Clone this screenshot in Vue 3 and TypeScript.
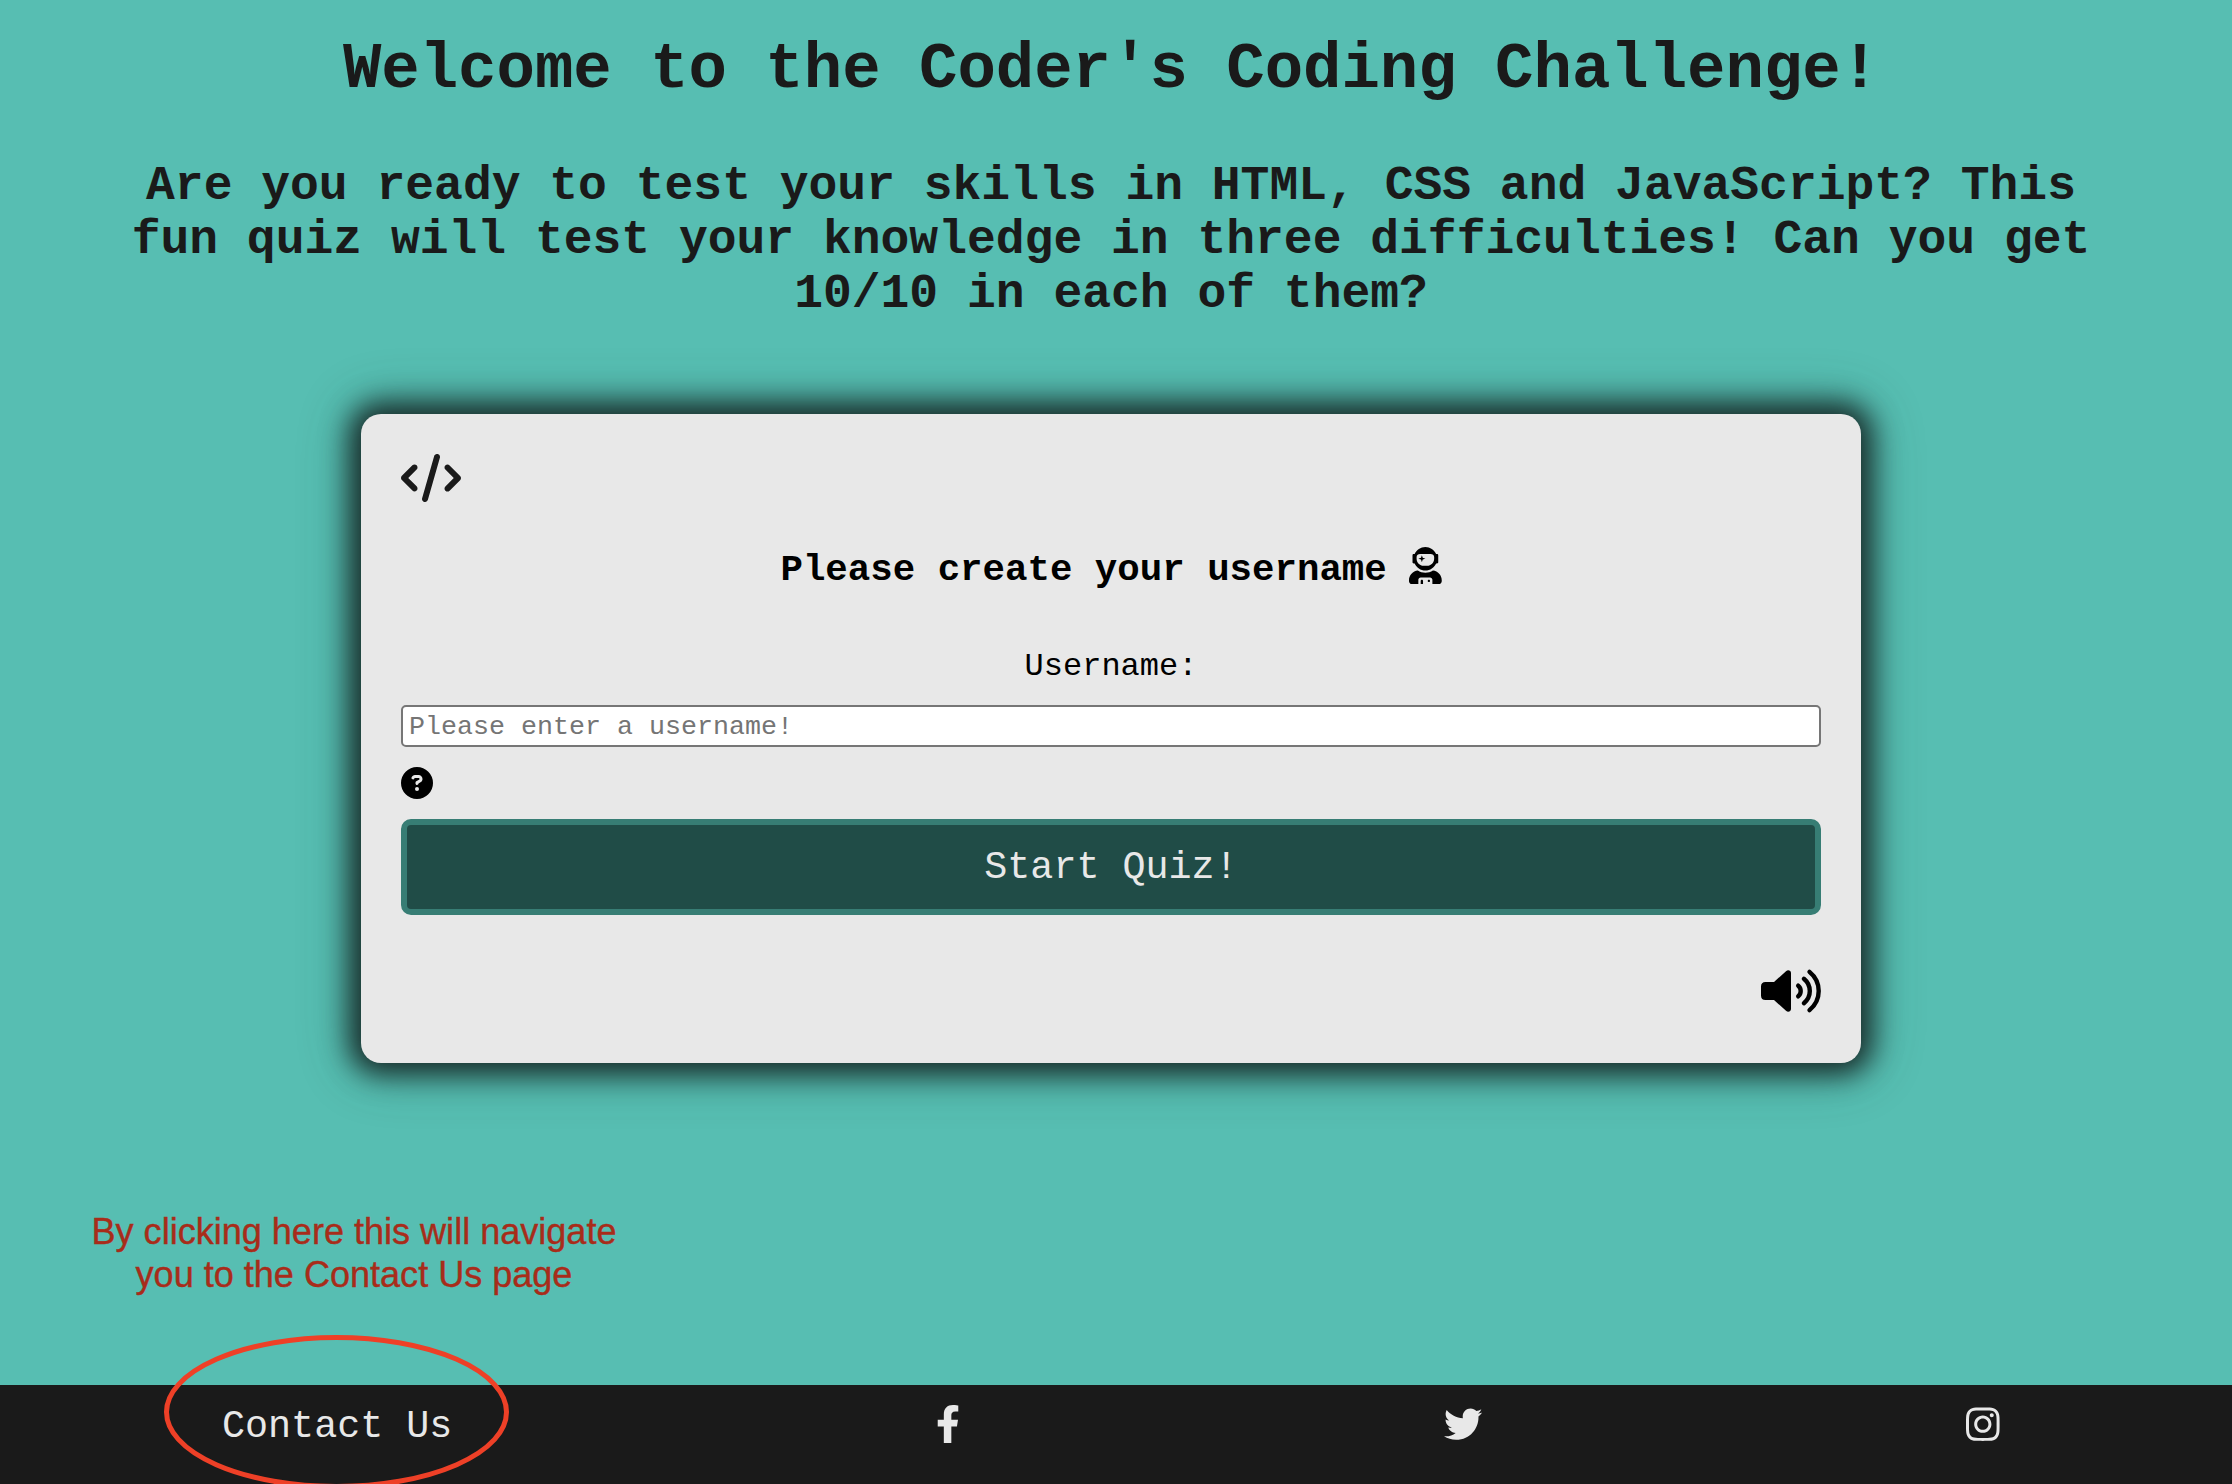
<script setup lang="ts">
import { ref } from 'vue'

const username = ref('')
</script>

<template>
  <div class="page">
    <main class="main">
      <h1>Welcome to the Coder's Coding Challenge!</h1>
      <h2>
        Are you ready to test your skills in HTML, CSS and JavaScript? This<br />
        fun quiz will test your knowledge in three difficulties! Can you get<br />
        10/10 in each of them?
      </h2>
      <section class="card">
        <svg class="code" viewBox="0 0 640 512"><path d="M392.8 1.2c-17-4.900-34.700 5-39.600 22l-128 448c-4.900 17 5 34.700 22 39.600s34.700-5 39.600-22l128-448c4.900-17-5-34.700-22-39.600zm80.600 120.100c-12.500 12.500-12.500 32.800 0 45.300L562.700 256l-89.400 89.400c-12.500 12.500-12.500 32.800 0 45.300s32.800 12.500 45.300 0l112-112c12.500-12.500 12.500-32.800 0-45.300l-112-112c-12.500-12.500-32.800-12.500-45.300 0zm-306.700 0c-12.500-12.500-32.800-12.500-45.300 0l-112 112c-12.500 12.500-12.500 32.800 0 45.300l112 112c12.500 12.500 32.800 12.500 45.300 0s12.500-32.800 0-45.300L77.300 256l89.400-89.400c12.500-12.500 12.500-32.800 0-45.300z" /></svg>
        <h3>
          <span>Please create your username</span>
          <svg class="user" viewBox="0 0 448 512">
            <path fill-rule="evenodd" d="M64 224h13.500c24.700 56.500 80.900 96 146.500 96s121.800-39.500 146.500-96H384c8.800 0 16-7.200 16-16v-96c0-8.800-7.200-16-16-16h-13.500C345.800 39.500 289.600 0 224 0S102.200 39.500 77.500 96H64c-8.800 0-16 7.200-16 16v96c0 8.800 7.200 16 16 16zm40-88c0-22.100 21.500-40 48-40h144c26.500 0 48 17.900 48 40v24c0 53-43 96-96 96h-48c-53 0-96-43-96-96v-24zm72 72l12-36 36-12-36-12-12-36-12 36-36 12 36 12 12 36zm151.600 113.400C297.700 340.700 262.200 352 224 352s-73.700-11.300-103.600-30.600C52.900 328.500 0 385 0 454.400v9.600c0 26.500 21.500 48 48 48h80v-64c0-17.700 14.300-32 32-32h128c17.700 0 32 14.300 32 32v64h80c26.500 0 48-21.500 48-48v-9.600c0-69.400-52.900-125.900-120.400-133zM272 448c-8.800 0-16 7.200-16 16s7.200 16 16 16 16-7.200 16-16-7.200-16-16-16zm-96 0c-8.800 0-16 7.200-16 16v48h32v-48c0-8.800-7.200-16-16-16z" />
          </svg>
        </h3>
        <label for="username">Username:</label>
        <input id="username" v-model="username" type="text" placeholder="Please enter a username!" />
        <svg class="help" viewBox="0 0 512 512"><path d="M256 512A256 256 0 1 0 256 0a256 256 0 1 0 0 512zM169.800 165.300c7.900-22.300 29.100-37.300 52.800-37.300h58.300c34.900 0 63.100 28.300 63.100 63.100c0 22.600-12.100 43.500-31.700 54.800L280 264.400c-.2 13-10.900 23.600-24 23.600c-13.300 0-24-10.700-24-24V250.500c0-8.600 4.600-16.500 12.100-20.800l44.300-25.400c4.700-2.700 7.600-7.700 7.600-13.100c0-8.400-6.800-15.100-15.100-15.100H222.600c-3.400 0-6.400 2.100-7.500 5.300l-.4 1.200c-4.400 12.500-18.200 19-30.600 14.600s-19-18.200-14.600-30.600l.4-1.200zM224 352a32 32 0 1 1 64 0 32 32 0 1 1-64 0z" /></svg>
        <button type="button">Start Quiz!</button>
        <svg class="sound" viewBox="0 0 60 48">
          <path d="M4.500 15H13L25 4.200C27 2.500 30 3.500 30 6V42C30 44.500 27 45.500 25 43.800L13 33H4.500Q0 33 0 28.500V19.500Q0 15 4.500 15Z" />
          <g class="waves">
            <path d="M37.200 18.700Q39.700 20.700 39.700 24T37.200 29.300" />
            <path d="M42.900 11.800Q48.800 16.700 48.800 24T42.900 36.200" />
            <path d="M48.500 4.900Q57.700 12.500 57.700 24T48.500 43.100" />
          </g>
        </svg>
      </section>
    </main>

    <footer class="footer">
      <a class="contact">Contact Us</a>
      <svg class="social" viewBox="0 0 320 512" style="width: 24px"><path d="M279.140 288l14.220-92.660h-88.910v-60.130c0-25.350 12.420-50.060 52.240-50.060h40.420V6.260S260.430 0 225.360 0c-73.220 0-121.080 44.380-121.080 124.720v70.620H22.890V288h81.390v224h100.170V288z" /></svg>
      <svg class="social" viewBox="0 0 512 512" style="width: 38.4px"><path d="M459.370 151.716c.325 4.548.325 9.097.325 13.645 0 138.720-105.583 298.558-298.558 298.558-59.452 0-114.680-17.219-161.137-47.106 8.447.974 16.568 1.299 25.340 1.299 49.055 0 94.213-16.568 130.274-44.832-46.132-.975-84.792-31.188-98.112-72.772 6.498.974 12.995 1.624 19.818 1.624 9.421 0 18.843-1.300 27.614-3.573-48.081-9.747-84.143-51.980-84.143-102.985v-1.299c13.969 7.797 30.214 12.670 47.431 13.319-28.264-18.843-46.781-51.005-46.781-87.391 0-19.492 5.197-37.360 14.294-52.954 51.655 63.675 129.300 105.258 216.365 109.807-1.624-7.797-2.599-15.918-2.599-24.040 0-57.828 46.782-104.934 104.934-104.934 30.213 0 57.502 12.670 76.670 33.137 23.715-4.548 46.456-13.320 66.599-25.340-7.798 24.366-24.366 44.833-46.132 57.827 21.117-2.273 41.584-8.122 60.426-16.243-14.292 20.791-32.161 39.308-52.628 54.253z" /></svg>
      <svg class="social" viewBox="0 0 448 512" style="width: 33.6px"><path d="M224.100 141c-63.600 0-114.900 51.300-114.900 114.900s51.300 114.900 114.900 114.900S339 319.500 339 255.900 287.700 141 224.100 141zm0 189.600c-41.100 0-74.700-33.500-74.700-74.700s33.500-74.700 74.700-74.700 74.700 33.500 74.700 74.700-33.600 74.700-74.700 74.700zm146.400-194.300c0 14.900-12 26.800-26.800 26.800-14.900 0-26.800-12-26.800-26.800s12-26.800 26.800-26.800 26.800 12 26.800 26.800zm76.100 27.200c-1.700-35.900-9.900-67.700-36.200-93.900-26.200-26.200-58-34.400-93.900-36.200-37-2.100-147.900-2.100-184.900 0-35.800 1.700-67.600 9.900-93.900 36.100s-34.400 58-36.200 93.900c-2.100 37-2.100 147.900 0 184.900 1.700 35.900 9.900 67.700 36.200 93.900s58 34.400 93.900 36.200c37 2.100 147.900 2.100 184.900 0 35.900-1.700 67.700-9.900 93.900-36.200 26.200-26.200 34.400-58 36.200-93.900 2.100-37 2.100-147.800 0-184.800zM398.800 388c-7.800 19.600-22.900 34.700-42.600 42.600-29.500 11.700-99.500 9-132.100 9s-102.700 2.600-132.100-9c-19.600-7.800-34.700-22.900-42.600-42.600-11.700-29.500-9-99.500-9-132.100s-2.600-102.700 9-132.100c7.800-19.600 22.900-34.700 42.600-42.600 29.500-11.700 99.500-9 132.100-9s102.700-2.600 132.100 9c19.600 7.800 34.700 22.900 42.600 42.600 11.700 29.500 9 99.500 9 132.100s2.700 102.700-9 132.100z" /></svg>
    </footer>

    <!-- Callout drawn over the page, pointing at the contact link -->
    <p class="note">By clicking here this will navigate<br />you to the Contact Us page</p>
    <svg class="ring" viewBox="0 0 350 152"><ellipse cx="174.500" cy="78" rx="170" ry="74.500" /></svg>
  </div>
</template>

<style>
body { background: #57beb2; }
</style>

<style scoped>
.page {
  position: relative;
  box-sizing: border-box;
  width: 2232px;
  height: 1484px;
  overflow: hidden;
  display: flex;
  flex-direction: column;
  background: #57beb2;
  font-family: "Courier New", "Liberation Mono", monospace;
}
.main {
  flex: 1;
  display: flex;
  flex-direction: column;
  align-items: center;
  padding: 34px 10px 0 0;
}
h1, h2 {
  margin: 0;
  color: #1a1a1a;
  text-align: center;
  white-space: nowrap;
}
h1 { font-size: 64px; line-height: 72px; }
h2 { margin-top: 53px; font-size: 48px; line-height: 54px; }
.card {
  box-sizing: border-box;
  display: flex;
  flex-direction: column;
  width: 1500px;
  height: 649px;
  margin-top: 93px;
  padding: 40px;
  border-radius: 20px;
  background: #e8e8e8;
  box-shadow: 0 0 28px 11px #182c2a, 0 0 52px 12px rgba(24, 70, 64, 0.3);
}
.code { width: 60px; height: 48px; fill: #1a1a1a; }
h3 {
  display: flex;
  justify-content: center;
  margin: 46px 0 0;
  font-size: 37.44px;
  line-height: 44px;
  gap: 22px;
}
.user { width: 32.76px; height: 37.44px; margin-top: -1px; }
label {
  margin-top: 57px;
  font-size: 32px;
  line-height: 36px;
  text-align: center;
}
input {
  box-sizing: border-box;
  width: 100%;
  height: 42px;
  margin: 20px 0 0;
  padding: 1px 6px 0;
  border: 2px solid #767676;
  border-radius: 5px;
  background: #fff;
  font-family: inherit;
  font-size: 26.667px;
}
input::placeholder { color: #757575; }
.help { width: 32px; height: 32px; margin-top: 20px; }
button {
  height: 96px;
  margin: 20px 0 0;
  padding: 1px 0 0;
  border: 6px solid #377d74;
  border-radius: 10px;
  background: #204c47;
  color: #e8e8e8;
  font-family: inherit;
  font-size: 38.4px;
}
.sound { align-self: flex-end; width: 60px; height: 48px; margin-top: 52px; }
.waves { fill: none; stroke: #000; stroke-width: 4.4; stroke-linecap: round; }
.footer {
  box-sizing: border-box;
  display: flex;
  align-items: flex-start;
  gap: 483.8px;
  height: 99px;
  padding: 20px 0 0 222px;
  background: #1a1a1a;
}
.contact { color: #e8e8e8; font-size: 38.4px; line-height: 45px; white-space: nowrap; }
.social { flex: none; height: 38.4px; fill: #e8e8e8; }
.note {
  position: absolute;
  left: 91px;
  top: 1210px;
  width: 526px;
  margin: 0;
  color: #a82c1a;
  font-family: "Liberation Sans", Arial, sans-serif;
  font-size: 36.05px;
  line-height: 43.3px;
  text-align: center;
  white-space: nowrap;
  -webkit-text-stroke: 0.4px #a82c1a;
}
.ring {
  position: absolute;
  left: 162px;
  top: 1334px;
  width: 350px;
  height: 152px;
  fill: none;
  stroke: #ee4027;
  stroke-width: 5;
}
</style>
